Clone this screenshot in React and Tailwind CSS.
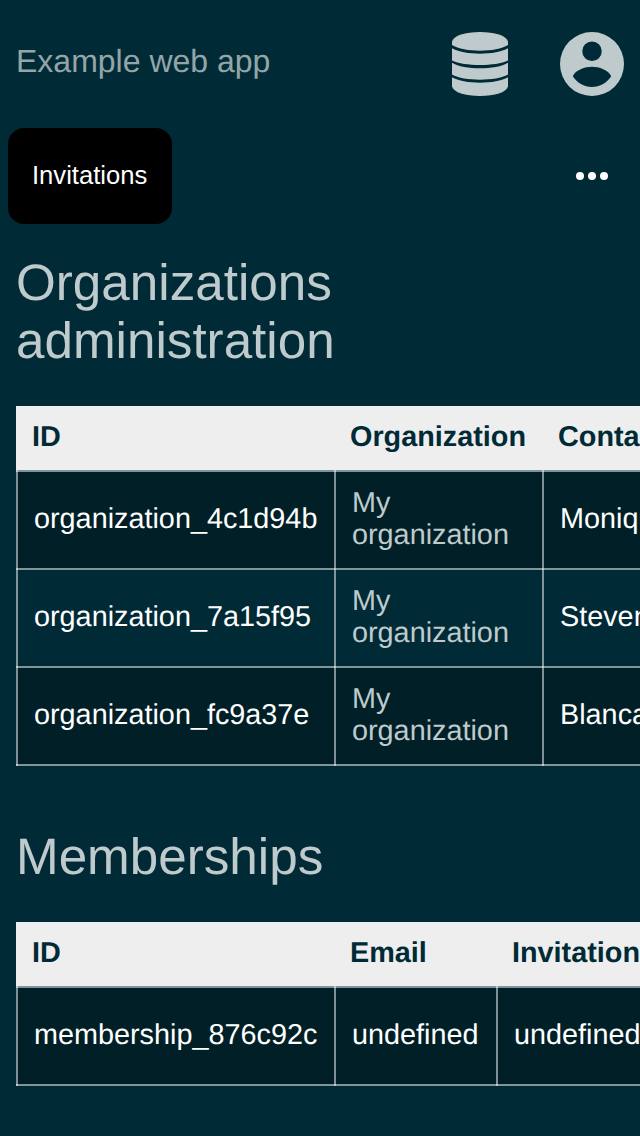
function DatabaseIcon() {
  return (
    <svg viewBox="0 0 56 64" className="h-16 w-14" fill="currentColor">
      <path d="M0 9.500 C2 3.500 13 0 28 0 S54 3.500 56 9.500 V13 C44 20.600 12 20.600 0 13 Z" />
      <path d="M0 16.300 C12 23.500 44 23.500 56 16.300 V28.500 C44 34.500 12 34.500 0 28.500 Z" />
      <path d="M0 30.700 C12 38.100 44 38.100 56 30.700 V42.500 C44 49.400 12 49.400 0 42.500 Z" />
      <path d="M0 45.300 C12 52.500 44 52.500 56 45.300 V54.500 C54 60.500 43 64 28 64 S2 60.500 0 54.500 Z" />
    </svg>
  );
}

function AccountIcon() {
  return (
    <svg viewBox="0 0 64 64" className="size-16" fill="currentColor" fillRule="evenodd">
      <path d="M32 0 A32 32 0 1 1 32 64 A32 32 0 1 1 32 0 Z M32 9.500 A9.750 9.750 0 1 0 32 29 A9.750 9.750 0 1 0 32 9.500 Z M12.800 44.300 C15.500 38 25 34.800 32 34.800 S48.500 38 51.200 44.300 C47.200 50.600 40 55 32 55 S16.800 50.600 12.800 44.300 Z" />
    </svg>
  );
}

function DataTable({ columns, headers, rows }) {
  return (
    <div className="w-[900px] shrink-0 text-[28.8px] leading-8">
      <div className={`grid h-16 ${columns} bg-[#eeeeee] font-bold text-[#002b36]`}>
        {headers.map((header) => (
          <div key={header} className="flex items-center whitespace-nowrap pb-0.5 pl-4">{header}</div>
        ))}
      </div>
      {rows.map((row, index) => (
        <div
          key={index}
          className={`grid h-[98px] ${columns} ${index % 2 === 0 ? "bg-[#001f27]" : ""} border-t-2 border-[#80959b] last:h-[100px] last:border-b-2`}
        >
          {row.map((cell, i) => (
            <div
              key={i}
              className={`-mt-0.5 flex items-center border-l-2 border-white/50 pl-4 ${index === rows.length - 1 ? "-mb-0.5 pb-0.5" : ""} ${cell === "My organization" ? "pr-8 text-[#bfcacd]" : "whitespace-nowrap text-white"}`}
            >
              {cell}
            </div>
          ))}
        </div>
      ))}
    </div>
  );
}

export default function App() {
  return (
    <div className="h-[1136px] w-full overflow-hidden bg-[#002b36] font-['Liberation_Sans',sans-serif] text-[#bfcacd] [text-rendering:geometricPrecision]">
      <header className="flex h-32 items-center justify-between pl-4 pr-4">
        <div className="pb-1.5 text-[32px] text-[#93a5a9]">Example web app</div>
        <div className="flex items-center gap-[52px]">
          <DatabaseIcon />
          <AccountIcon />
        </div>
      </header>
      <nav className="flex h-24 items-center justify-between pl-2 pr-8">
        <button className="h-24 w-[164px] rounded-2xl bg-black pb-0.5 pl-6 text-left text-[25.6px] text-white">Invitations</button>
        <svg viewBox="0 0 32 8" className="h-2 w-8" fill="white">
          <circle cx="4" cy="4" r="4" />
          <circle cx="16" cy="4" r="4" />
          <circle cx="28" cy="4" r="4" />
        </svg>
      </nav>
      <main className="pl-4">
        <h1 className="w-[400px] pt-[30px] text-[51.2px] leading-[58px]">Organizations administration</h1>
        <div className="mt-9 flex overflow-hidden">
          <DataTable
            columns="grid-cols-[318px_208px_374px]"
            headers={["ID", "Organization", "Contact"]}
            rows={[
              ["organization_4c1d94b", "My organization", "Monique"],
              ["organization_7a15f95", "My organization", "Steven"],
              ["organization_fc9a37e", "My organization", "Blanca"],
            ]}
          />
        </div>
        <h2 className="mt-[62px] text-[51.2px] leading-[58px]">Memberships</h2>
        <div className="mt-9 flex overflow-hidden">
          <DataTable
            columns="grid-cols-[318px_162px_420px]"
            headers={["ID", "Email", "Invitation"]}
            rows={[["membership_876c92c", "undefined", "undefined"]]}
          />
        </div>
      </main>
    </div>
  );
}
